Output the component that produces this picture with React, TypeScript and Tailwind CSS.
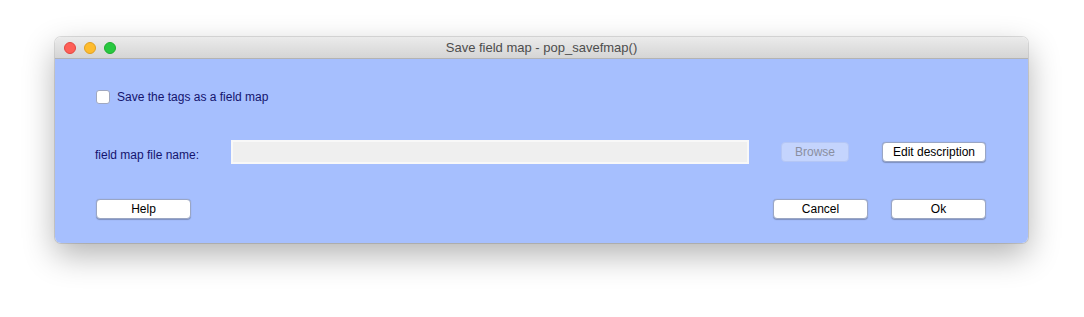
import React from "react";

const font = { fontFamily: '"Liberation Sans", Arial, sans-serif' };

function Btn({ w, children, disabled }: { w: string; children: React.ReactNode; disabled?: boolean }) {
  return (
    <div
      className={`${w} h-[20px] flex items-center justify-center rounded-[4px] text-[12px] leading-none ${
        disabled
          ? "bg-[#c4d4fd] text-[#8a8fa0] border border-[#b4c6f5]"
          : "bg-white text-black border border-[#9aa6c4] shadow-[0_0.5px_1px_rgba(0,0,0,0.25)]"
      }`}
    >
      {children}
    </div>
  );
}

export default function App() {
  return (
    <div className="w-[1084px] h-[317px] bg-white pt-[37px] pl-[55px]" style={font}>
      <div className="w-[973px] rounded-[6px] overflow-hidden shadow-[0_12px_32px_rgba(0,0,0,0.3),0_0_0_1px_rgba(0,0,0,0.12)]">
        <div className="h-[22px] relative flex items-center bg-gradient-to-b from-[#ebebeb] to-[#d5d5d5] border-b border-[#b3b3b3]">
          <div className="flex gap-[8px] pl-[9px]">
            <div className="w-[12px] h-[12px] rounded-full bg-[#fe5f57] border border-[#e14640]" />
            <div className="w-[12px] h-[12px] rounded-full bg-[#febc2e] border border-[#dfa023]" />
            <div className="w-[12px] h-[12px] rounded-full bg-[#28c840] border border-[#1fad2f]" />
          </div>
          <div className="absolute inset-0 flex items-center justify-center text-[13px] text-[#4d4d4d]">
            Save field map - pop_savefmap()
          </div>
        </div>
        <div className="bg-[#a6bffe] h-[184px] flex flex-col pt-[26px] pl-[40px]">
          <div className="h-[24px] flex items-center">
            <div className="ml-[1px] w-[14px] h-[14px] rounded-[3px] bg-white border border-[#a0a8c0]" />
            <span className="ml-[7px] text-[12px] text-[#14146e]">Save the tags as a field map</span>
          </div>
          <div className="h-[24px] mt-[31px] flex items-center">
            <span className="w-[136px] text-[12px] text-[#14146e] pt-[6px]">field map file name:</span>
            <div className="w-[518px] h-[24px] bg-[#efefef] border-2 border-[#f8f8f8]" />
            <div className="ml-[32px]">
              <Btn w="w-[68px]" disabled>
                Browse
              </Btn>
            </div>
            <div className="ml-[33px]">
              <Btn w="w-[104px]">Edit description</Btn>
            </div>
          </div>
          <div className="h-[20px] mt-[35px] flex items-center">
            <div className="ml-[1px]">
              <Btn w="w-[95px]">Help</Btn>
            </div>
            <div className="ml-[582px]">
              <Btn w="w-[95px]">Cancel</Btn>
            </div>
            <div className="ml-[23px]">
              <Btn w="w-[95px]">Ok</Btn>
            </div>
          </div>
        </div>
      </div>
    </div>
  );
}
